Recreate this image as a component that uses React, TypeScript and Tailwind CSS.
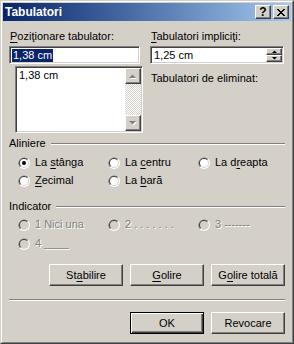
import type { ReactNode } from 'react';

const RAISED =
  'bg-[#d4d0c8] border border-t-white border-l-white border-r-[#404040] border-b-[#404040] shadow-[inset_-1px_-1px_#808080]';
const SUNKEN =
  'border border-t-[#808080] border-l-[#808080] border-r-white border-b-white shadow-[inset_1px_1px_#404040,inset_-1px_-1px_#d4d0c8]';
const DISABLED = 'text-[#808080] [text-shadow:1px_1px_0_#ffffff]';

function U({ children }: { children: ReactNode }) {
  return <span className="underline underline-offset-[2px]">{children}</span>;
}

function Radio({ checked = false, disabled = false }: { checked?: boolean; disabled?: boolean }) {
  return (
    <svg width="12" height="12" viewBox="0 0 12 12" className="shrink-0">
      <circle cx="6" cy="6" r="6" fill="#ffffff" />
      <path d="M1.76 10.24 A6 6 0 0 1 10.24 1.76 Z" fill="#808080" />
      <circle cx="6" cy="6" r="5" fill="#d4d0c8" />
      <path d="M2.46 9.54 A5 5 0 0 1 9.54 2.46 Z" fill="#404040" />
      <circle cx="6" cy="6" r="4" fill={disabled ? '#d4d0c8' : '#ffffff'} />
      {checked && <circle cx="6" cy="6" r="2" fill="#000000" />}
    </svg>
  );
}

function Arrow({ up, disabled = false }: { up: boolean; disabled?: boolean }) {
  const pts = up ? '0,4 7,4 3.5,0.5' : '0,0 7,0 3.5,3.5';
  return (
    <svg width="8" height="5" viewBox="0 0 8 5">
      {disabled && <polygon points={pts} fill="#ffffff" transform="translate(1 1)" />}
      <polygon points={pts} fill={disabled ? '#808080' : '#000000'} />
    </svg>
  );
}

function SmallArrow({ up }: { up: boolean }) {
  const pts = up ? '0,3 5,3 2.5,0.5' : '0,0 5,0 2.5,2.5';
  return (
    <svg width="5" height="3" viewBox="0 0 5 3">
      <polygon points={pts} fill="#000000" />
    </svg>
  );
}

function CloseGlyph() {
  const rows = ['11....11', '.11..11.', '..1111..', '...11...', '..1111..', '.11..11.', '11....11'];
  return (
    <svg width="8" height="7" viewBox="0 0 8 7" shapeRendering="crispEdges">
      {rows.flatMap((r, y) =>
        r.split('').map((c, x) => (c === '1' ? <rect key={`${x}-${y}`} x={x} y={y} width="1" height="1" fill="#000" /> : null)),
      )}
    </svg>
  );
}

function Option({ label, checked, disabled }: { label: ReactNode; checked?: boolean; disabled?: boolean }) {
  return (
    <div className="flex items-center gap-[5px] h-[13px] whitespace-nowrap">
      <Radio checked={checked} disabled={disabled} />
      <span className={disabled ? DISABLED : ''}>{label}</span>
    </div>
  );
}

function GroupLabel({ children }: { children: ReactNode }) {
  return (
    <div className="flex items-center gap-[5px] h-[13px]">
      <span>{children}</span>
      <div className="flex-1 border-t border-t-[#808080] border-b border-b-white" />
    </div>
  );
}

function Button({ children, isDefault = false }: { children: ReactNode; isDefault?: boolean }) {
  return (
    <div
      className={`w-[74px] h-[22px] flex items-center justify-center ${
        isDefault
          ? 'bg-[#d4d0c8] border border-black shadow-[inset_1px_1px_#ffffff,inset_-1px_-1px_#404040,inset_-2px_-2px_#808080]'
          : RAISED
      }`}
    >
      {children}
    </div>
  );
}

export default function App() {
  return (
    <div className="w-[294px] h-[344px] bg-[#d4d0c8] border border-t-[#d4d0c8] border-l-[#d4d0c8] border-r-[#404040] border-b-[#404040] [font-family:'Liberation_Sans',Arial,sans-serif] text-[11px] leading-[13px] text-black overflow-hidden">
      <div className="h-full border border-t-white border-l-white border-r-[#808080] border-b-[#808080] p-[1px] flex flex-col">
        {/* Title bar */}
        <div className="h-[18px] shrink-0 bg-linear-to-r from-[#0a246a] to-[#a6caf0] flex items-center pl-[2px] pr-[2px]">
          <span className="flex-1 text-white font-bold text-[12px]">Tabulatori</span>
          <div className={`${RAISED} w-[16px] h-[14px] flex items-center justify-center font-bold text-[12px] leading-none`}>
            ?
          </div>
          <div className={`${RAISED} ml-[2px] w-[16px] h-[14px] flex items-center justify-center`}>
            <CloseGlyph />
          </div>
        </div>

        {/* Body */}
        <div className="flex-1 flex flex-col px-[6px] pt-[9px]">
          <div className="flex gap-[7px]">
            {/* Left column */}
            <div className="w-[134px] flex flex-col">
              <p className="h-[13px] pl-[1px]">
                <U>P</U>oziţionare tabulator:
              </p>
              <div className={`${SUNKEN} mt-[3px] w-[131px] h-[18px] bg-white flex items-center pl-[2px]`}>
                <span className="bg-[#0a246a] text-white px-[1px]">1,38 cm</span>
              </div>
              <div className={`${SUNKEN} mt-[2px] ml-[6px] w-[128px] h-[67px] flex p-[1px]`}>
                <div className="flex-1 bg-white pl-[2px] pt-[1px]">1,38 cm</div>
                <div className="w-[16px] flex flex-col">
                  <div className={`${RAISED} h-[16px] flex items-center justify-center`}>
                    <Arrow up disabled />
                  </div>
                  <div className="flex-1 bg-[image:repeating-conic-gradient(#d4d0c8_0_25%,#ffffff_0_50%)] bg-[length:2px_2px]" />
                  <div className={`${RAISED} h-[16px] flex items-center justify-center`}>
                    <Arrow up={false} disabled />
                  </div>
                </div>
              </div>
            </div>

            {/* Right column */}
            <div className="w-[134px] flex flex-col">
              <p className="h-[13px] pl-[1px]">
                <U>T</U>abulatori impliciţi:
              </p>
              <div className={`${SUNKEN} mt-[3px] h-[18px] bg-white flex p-[1px]`}>
                <span className="flex-1 pl-[2px] self-center">1,25 cm</span>
                <div className="w-[16px] flex flex-col">
                  <div className={`${RAISED} flex-1 flex items-center justify-center`}>
                    <SmallArrow up />
                  </div>
                  <div className={`${RAISED} flex-1 flex items-center justify-center`}>
                    <SmallArrow up={false} />
                  </div>
                </div>
              </div>
              <p className="mt-[8px] h-[13px] pl-[1px]">Tabulatori de eliminat:</p>
            </div>
          </div>

          {/* Aliniere */}
          <div className="mt-[4px]">
            <GroupLabel>Aliniere</GroupLabel>
          </div>
          <div className="mt-[6px] pl-[9px] grid grid-cols-[90px_90px_90px] gap-y-[5px]">
            <Option checked label={<>La <U>s</U>tânga</>} />
            <Option label={<>La <U>c</U>entru</>} />
            <Option label={<>La d<U>r</U>eapta</>} />
            <Option label={<><U>Z</U>ecimal</>} />
            <Option label={<>La <U>b</U>ară</>} />
          </div>

          {/* Indicator */}
          <div className="mt-[13px]">
            <GroupLabel>Indicator</GroupLabel>
          </div>
          <div className="mt-[5px] pl-[9px] grid grid-cols-[90px_90px_90px] gap-y-[6px]">
            <Option disabled label="1 Nici una" />
            <Option disabled label="2 . . . . . . ." />
            <Option disabled label="3 -------" />
            <Option disabled label="4 ____" />
          </div>

          {/* Action buttons */}
          <div className="mt-[14px] flex justify-end gap-[7px]">
            <Button>
              St<U>a</U>bilire
            </Button>
            <Button>
              <U>G</U>olire
            </Button>
            <Button>
              G<U>o</U>lire totală
            </Button>
          </div>

          <div className="mt-[13px] border-t border-t-[#808080] border-b border-b-white" />

          <div className="mt-[11px] flex justify-end gap-[7px]">
            <Button isDefault>OK</Button>
            <Button>Revocare</Button>
          </div>
        </div>
      </div>
    </div>
  );
}
